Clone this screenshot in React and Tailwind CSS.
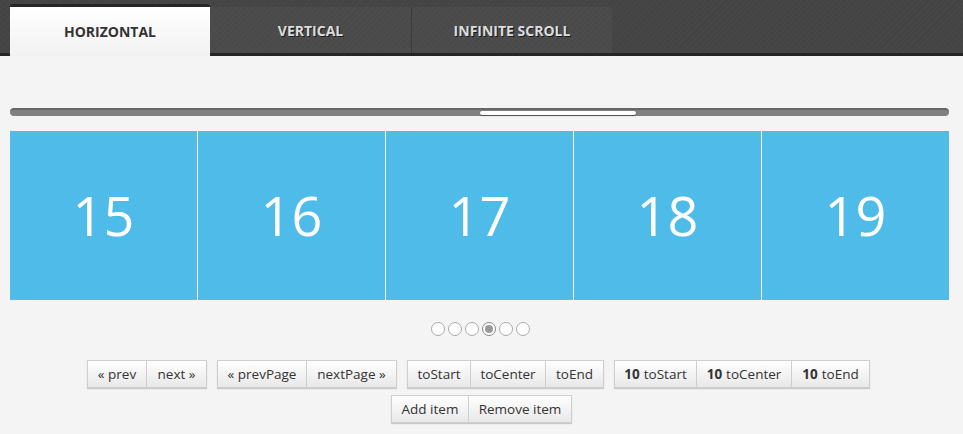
import React from 'react';

const font = { fontFamily: '"Open Sans", "Segoe UI", sans-serif' };

const slides = [15, 16, 17, 18, 19];

const rowOne = [
  [
    { label: '« prev', w: 'w-[60px]' },
    { label: 'next »', w: 'w-[60px]' },
  ],
  [
    { label: '« prevPage', w: 'w-[90px]' },
    { label: 'nextPage »', w: 'w-[90px]' },
  ],
  [
    { label: 'toStart', w: 'w-[64px]' },
    { label: 'toCenter', w: 'w-[75px]' },
    { label: 'toEnd', w: 'w-[58px]' },
  ],
  [
    { label: 'toStart', bold: '10', w: 'w-[83px]' },
    { label: 'toCenter', bold: '10', w: 'w-[95px]' },
    { label: 'toEnd', bold: '10', w: 'w-[78px]' },
  ],
];

const rowTwo = [
  [
    { label: 'Add item', w: 'w-[78px]' },
    { label: 'Remove item', w: 'w-[103px]' },
  ],
];

function ButtonGroup({ items }) {
  return (
    <div className="flex shadow-[0_1px_1px_rgba(0,0,0,0.18)]">
      {items.map((b, i) => (
        <button
          key={i}
          className={`${b.w} h-[28px] text-[13.5px] text-[#333] bg-gradient-to-b from-white to-[#e8e8e8] border border-[#cfcfcf] ${i > 0 ? 'border-l-0' : ''} flex items-center justify-center whitespace-nowrap`}
        >
          {b.bold && <b className="font-bold mr-[4px]">{b.bold}</b>}
          {b.label}
        </button>
      ))}
    </div>
  );
}

export default function App() {
  return (
    <div className="w-[963px] h-[434px] bg-[#f4f4f4] overflow-hidden" style={font}>
      {/* header with tabs */}
      <div className="h-[56px] bg-[#434343] bg-[repeating-linear-gradient(135deg,#444_0px,#444_3px,#484848_3px,#484848_4px)] border-b-[3px] border-[#252525] flex items-end pl-[10px]">
        <div className="relative w-[200px] h-[49px] -mb-[3px] bg-gradient-to-b from-white to-[#f2f2f2] flex items-center justify-center text-[14px] font-bold text-[#333] before:content-[''] before:absolute before:left-0 before:right-0 before:-top-[3px] before:h-[3px] before:bg-[#262626] before:rounded-t-[3px]">
          HORIZONTAL
        </div>
        <div className="w-[201px] h-[46px] bg-[#4a4a4a] bg-[repeating-linear-gradient(135deg,#4a4a4a_0px,#4a4a4a_3px,#4e4e4e_3px,#4e4e4e_4px)] flex items-center justify-center text-[14px] font-bold text-[#ddd] [text-shadow:1px_1px_0_#1a1a1a]">
          VERTICAL
        </div>
        <div className="w-[201px] h-[46px] bg-[#4a4a4a] bg-[repeating-linear-gradient(135deg,#4a4a4a_0px,#4a4a4a_3px,#4e4e4e_3px,#4e4e4e_4px)] border-l border-[#3a3a3a] flex items-center justify-center text-[14px] font-bold text-[#ddd] [text-shadow:1px_1px_0_#1a1a1a]">
          INFINITE SCROLL
        </div>
      </div>

      {/* scrollbar */}
      <div className="ml-[10px] w-[939px] mt-[52px] h-[8px] rounded-full bg-[#808080] border-t-2 border-[#666] relative">
        <div className="absolute left-[470px] top-[1px] w-[156px] h-[4px] rounded-full bg-white shadow-[0_1px_1px_rgba(0,0,0,0.4)]" />
      </div>

      {/* slides */}
      <div className="ml-[10px] w-[939px] mt-[15px] h-[169px] flex">
        {slides.map((n, i) => (
          <div
            key={n}
            className={`flex-1 bg-[#4fbbe8] flex items-center justify-center text-white text-[54px] ${i > 0 ? 'border-l border-white' : ''}`}
          >
            {n}
          </div>
        ))}
      </div>

      {/* pages */}
      <div className="flex justify-center gap-[3px] mt-[22px] pr-[3px]">
        {[0, 1, 2, 3, 4, 5].map((i) => (
          <span
            key={i}
            className={`w-[14px] h-[14px] rounded-full border bg-white flex items-center justify-center ${i === 3 ? 'border-[#888]' : 'border-[#aaa]'}`}
          >
            {i === 3 && <span className="w-[8px] h-[8px] rounded-full bg-[#999]" />}
          </span>
        ))}
      </div>

      {/* controls */}
      <div className="flex flex-col items-center gap-y-[7px] mt-[24px]">
        <div className="flex gap-x-[10px] pr-[6px]">
          {rowOne.map((g, i) => (
            <ButtonGroup key={i} items={g} />
          ))}
        </div>
        <div className="flex gap-x-[10px]">
          {rowTwo.map((g, i) => (
            <ButtonGroup key={i} items={g} />
          ))}
        </div>
      </div>
    </div>
  );
}
